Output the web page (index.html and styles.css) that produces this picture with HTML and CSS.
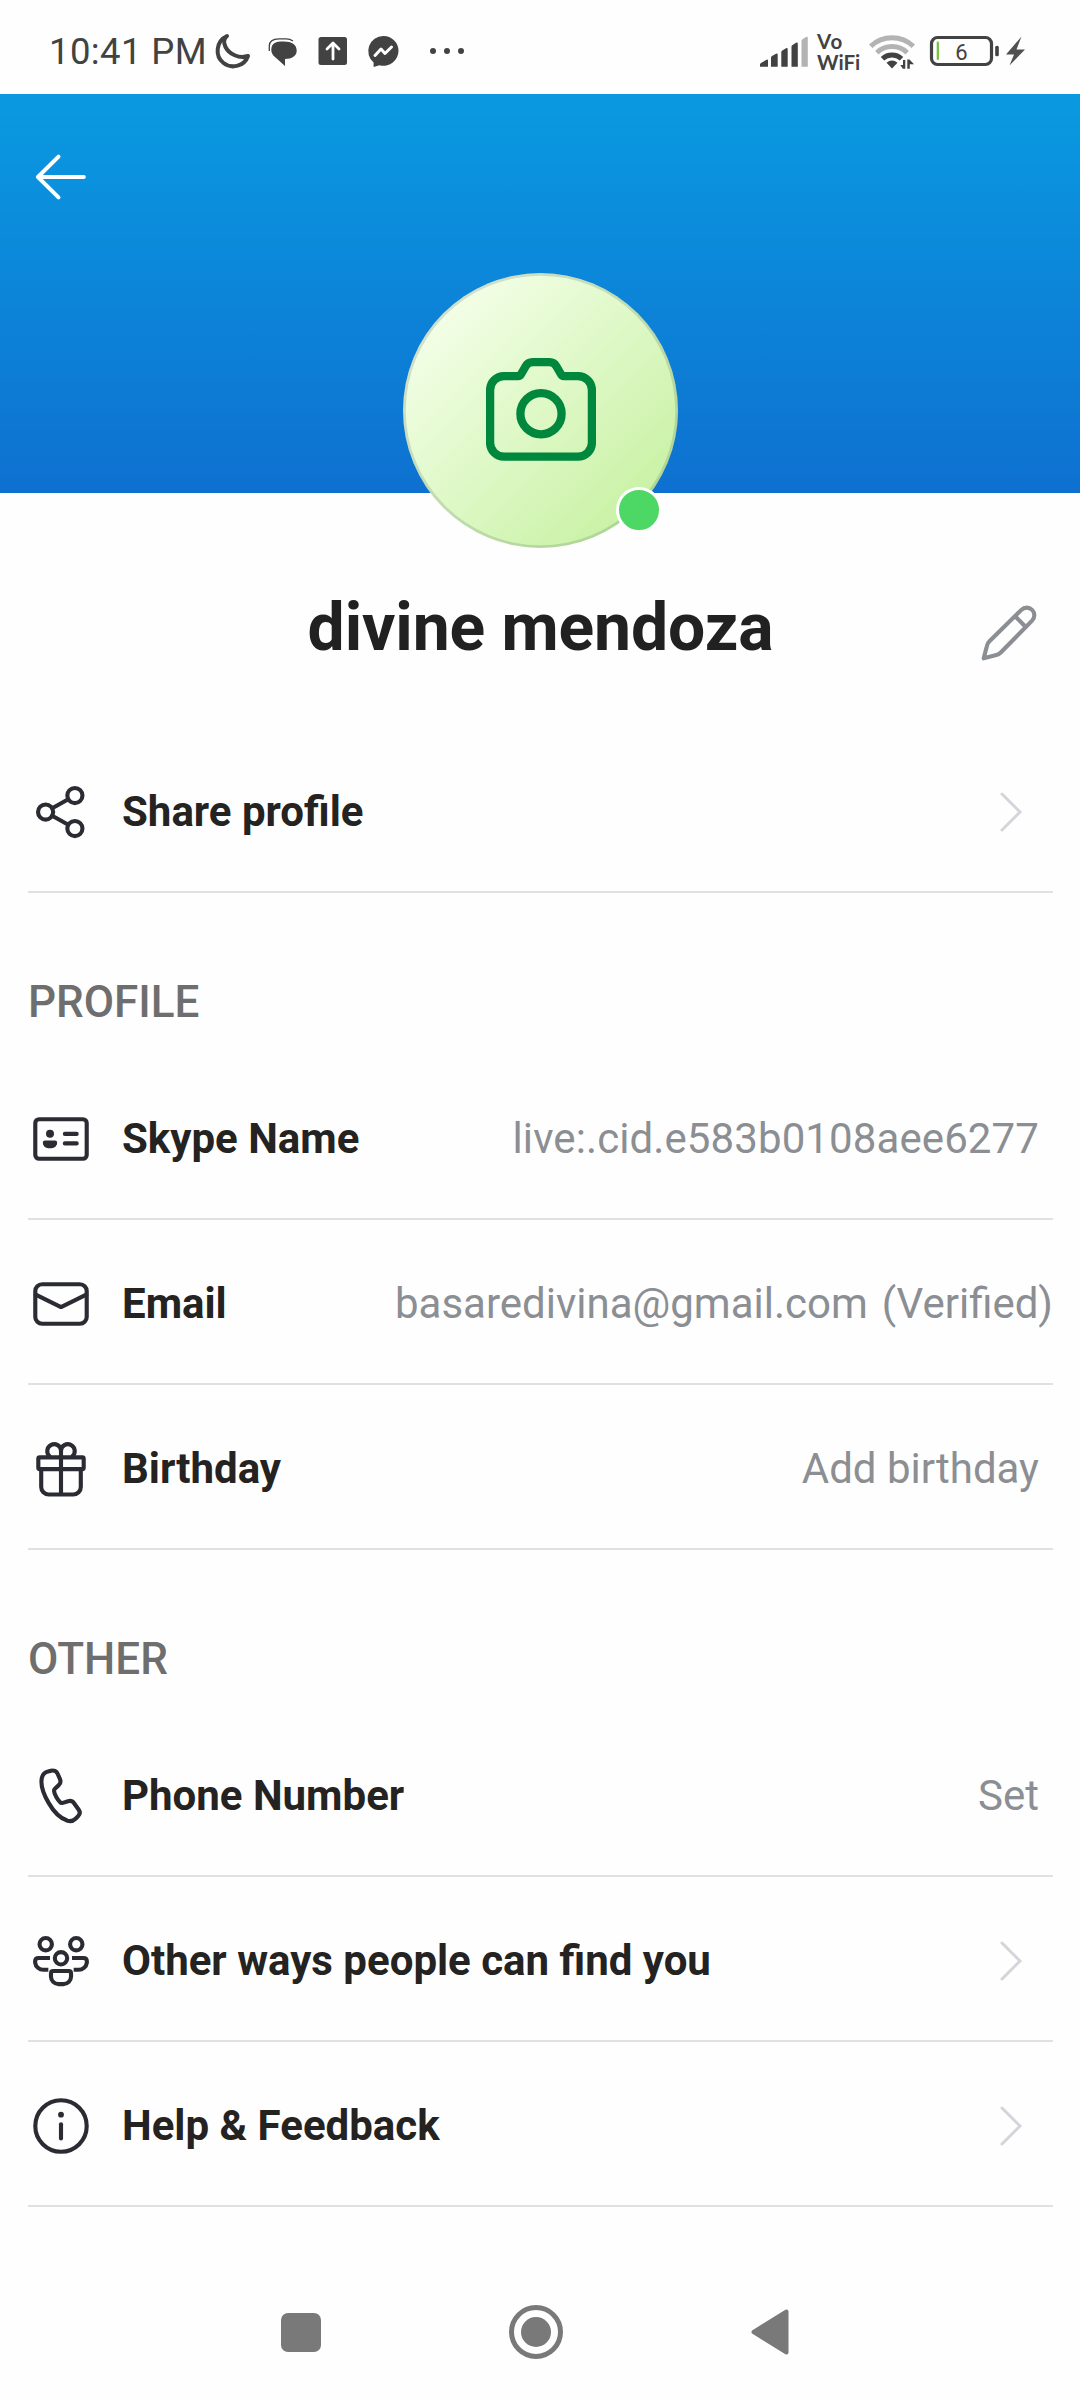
FILE: index.html
```html
<!DOCTYPE html>
<html lang="en">
<head>
<meta charset="utf-8">
<title>Profile</title>
<link rel="stylesheet" href="styles.css">
</head>
<body>
<div class="screen">
  <div class="status-bar">
    <span class="clock">10:41 PM</span>
    <svg class="status-left" width="260" height="94" viewBox="210 0 260 94">
      <path class="moon" d="M227 36C216 41 214.500 56 223.500 63C232 69.500 244.500 66 248 56C239 59 229 54 225.500 47C223 42 224.500 38 227 36Z"/>
      <path class="fill" d="M283 41.500H284C291.500 41.500 296.700 44.500 296.700 50.500C296.700 56 292 59 285 59V66L275 57C271.500 54 271.300 51 271.300 49C271.800 43 276 41.500 283 41.500Z"/>
      <path class="thin" d="M269.300 51V46C269.300 41 273 38.800 279 38.800H286C289 38.800 291 39.500 293 41"/>
      <rect class="fill" x="318.500" y="37" width="28.500" height="28" rx="2.500"/>
      <path class="white-stroke" d="M333 59V43.500M327 49L333 43L339 49"/>
      <path class="fill" d="M383.200 36A15 15 0 0 1 398.500 51A15 15 0 0 1 379.500 65.300L373.600 67V62.500A15 15 0 0 1 383.200 36Z"/>
      <path class="white-stroke zig" d="M375 55.500L381 49L385 53.500L391.500 47"/>
      <circle class="fill" cx="433" cy="51" r="3"/><circle class="fill" cx="447" cy="51" r="3"/><circle class="fill" cx="461" cy="51" r="3"/>
    </svg>
    <svg class="signal" width="48" height="94" viewBox="760 0 48 94">
      <path class="fill" d="M760 66.800V64.500Q760 63.500 761 63L766 60Q768 58.800 768 60.500V66.800ZM771 66.800V57.500Q771 56.500 772 56L776 53.700Q777.700 52.800 777.700 54.800V66.800ZM781.300 66.800V52Q781.300 51 782.300 50.500L786 48.300Q787.700 47.500 787.700 49.300V66.800ZM791.500 66.800V46.500Q791.500 45.500 792.500 45L796 42.700Q797.800 41.800 797.800 43.700V66.800Z"/>
      <path class="fade" d="M801.500 66.800V41Q801.500 40 802.500 39.300L806 37Q807.800 36 807.800 38V66.800Z"/>
    </svg>
    <span class="vowifi"><span class="vo">Vo</span><span>WiFi</span></span>
    <svg class="status-right" width="160" height="94" viewBox="868 0 160 94">
      <path class="fade-arc" d="M870.700 46.200A31 31 0 0 1 913.300 46.200M876.800 52.700A22 22 0 0 1 907.200 52.700"/>
      <path class="arc" d="M882.500 58.800A13.800 13.800 0 0 1 901.500 58.800"/>
      <path class="fill" d="M886.500 62.700Q892 58.500 897.500 62.700L892 68.400ZM902.800 68.800L900.300 65H903V60H905.300V68.800ZM907.300 68.800V59.500H909.500L914 64.300H909.800V68.800Z"/>
      <rect class="battery" x="931.500" y="37.500" width="60" height="27" rx="6"/>
      <rect class="charge" x="936.700" y="41.500" width="2.300" height="18.500" rx="1"/>
      <rect class="fill" x="995.200" y="45.700" width="3.600" height="10.500" rx="1.500"/>
      <text class="level" x="961.500" y="59.800" text-anchor="middle">6</text>
      <path class="bolt" d="M1021.500 36.500L1006 54.500H1014L1009.500 65.500L1025 49.500H1016.500Z"/>
    </svg>
  </div>

  <div class="banner">
    <svg class="back" width="66" height="66" viewBox="0 0 24 24"><path d="M20.300 12H3.600M11.100 4.600L3.600 12L11.100 19.400"/></svg>
    <div class="avatar">
      <svg width="110" height="103" viewBox="0 0 110 103"><path d="M18 18.100H32Q34 18.100 35 16.300L39.500 8.500Q42 4.200 46.500 4.200H63.500Q68 4.200 70.500 8.500L75 16.300Q76 18.100 78 18.100H92A13.900 13.900 0 0 1 105.900 32V84.800A13.900 13.900 0 0 1 92 98.700H18A13.900 13.900 0 0 1 4.100 84.800V32A13.900 13.900 0 0 1 18 18.100Z"/><circle cx="55" cy="55.700" r="20.600"/></svg>
      <span class="presence"></span>
    </div>
  </div>

  <div class="name-row">
    <h1>divine mendoza</h1>
    <svg class="edit" width="66" height="66" viewBox="0 0 24 24"><path d="M2.800 21.200L4 16.600Q4.200 15.700 4.900 15L16.500 3.600A2.740 2.740 0 0 1 20.400 7.500L9 19.100Q8.300 19.800 7.400 20ZM14.200 5.900L18.100 9.800"/></svg>
  </div>

  <div class="list">
    <div class="row">
      <svg class="icon" viewBox="0 0 24 24"><circle cx="6.400" cy="12" r="2.750"/><circle cx="17.050" cy="6" r="2.750"/><circle cx="17.050" cy="18" r="2.750"/><path d="M8.800 10.650L14.650 7.350M8.800 13.350L14.650 16.650"/></svg>
      <span class="label">Share profile</span>
      <svg class="chevron" width="24" height="40" viewBox="0 0 24 40"><path d="M2 2L20 20L2 38"/></svg>
    </div>

    <h2>PROFILE</h2>
    <div class="row">
      <svg class="icon" viewBox="0 0 24 24"><rect x="2.650" y="4.800" width="18.700" height="14.400" rx="1.400"/><path d="M13.400 10.150H17.700M13.400 13.600H17.700"/><path class="solid" d="M8 8.600A1.450 1.450 0 1 1 8 11.500A1.450 1.450 0 1 1 8 8.600ZM6.150 12.500H9.850Q10.600 12.500 10.600 13.250C10.600 14.700 9.500 15.400 8 15.400S5.400 14.700 5.400 13.250Q5.400 12.500 6.150 12.500Z"/></svg>
      <span class="label">Skype Name</span>
      <span class="value id">live:.cid.e583b0108aee6277</span>
    </div>
    <div class="row">
      <svg class="icon" viewBox="0 0 24 24"><rect x="2.650" y="4.800" width="18.700" height="14.400" rx="2.500"/><path d="M2.800 8.600L12 13.100L21.200 8.600"/></svg>
      <span class="label">Email</span>
      <span class="value">basaredivina@gmail.com</span><span class="note">(Verified)</span>
    </div>
    <div class="row">
      <svg class="icon" viewBox="0 0 24 24"><rect x="3.750" y="7.750" width="16.500" height="4.300" rx=".5"/><path d="M4.800 12V18.500A2.750 2.750 0 0 0 7.550 21.250H16.450A2.750 2.750 0 0 0 19.200 18.500V12M12 5.300V21.250M12 7.500V5.300A2.500 2.500 0 1 0 7.800 7.300M12 5.300A2.500 2.500 0 1 1 16.200 7.300"/></svg>
      <span class="label">Birthday</span>
      <span class="value">Add birthday</span>
    </div>

    <h2>OTHER</h2>
    <div class="row">
      <svg class="icon" viewBox="0 0 24 24"><path d="M7.280 3.100L8.350 2.800A2 2 0 0 1 10.770 3.930L11.630 5.840A2 2 0 0 1 11.200 8.050L9.780 9.350A1 1 0 0 0 9.470 10C9.430 10.600 9.730 11.400 10.330 12.450C10.850 13.350 11.250 13.850 11.600 14.150A1 1 0 0 0 12.650 14.500L14.560 13.900A2 2 0 0 1 16.760 14.650L18.450 17A1.850 1.850 0 0 1 18.200 19.350L17.300 20.250A3 3 0 0 1 14.400 21C11.800 20.200 9.500 18 7.500 14.500C5.400 10.900 4.400 7.800 5.100 5.200A3 3 0 0 1 7.280 3.100Z"/></svg>
      <span class="label">Phone Number</span>
      <span class="value">Set</span>
    </div>
    <div class="row">
      <svg class="icon" viewBox="0 0 24 24"><circle cx="6.450" cy="5.900" r="2.250"/><circle cx="17.550" cy="5.900" r="2.250"/><circle cx="12" cy="11" r="2.250"/><path class="butt" d="M8 10.900H3.900Q2.600 10.900 2.600 12.100V12.600A3 3 0 0 0 5.600 15.200H7.400M16 10.900H20.100Q21.400 10.900 21.400 12.100V12.600A3 3 0 0 1 18.400 15.200H16.600"/><path d="M9.200 15.650H14.800Q15.650 15.650 15.650 16.500V17.650A2.750 2.750 0 0 1 12.900 20.400H11.100A2.750 2.750 0 0 1 8.350 17.650V16.500Q8.350 15.650 9.200 15.650Z"/></svg>
      <span class="label">Other ways people can find you</span>
      <svg class="chevron" width="24" height="40" viewBox="0 0 24 40"><path d="M2 2L20 20L2 38"/></svg>
    </div>
    <div class="row">
      <svg class="icon" viewBox="0 0 24 24"><circle cx="12" cy="12" r="9.350"/><path d="M12 11.400V16.500"/><circle class="solid" cx="12" cy="7.900" r="1.050"/></svg>
      <span class="label">Help &amp; Feedback</span>
      <svg class="chevron" width="24" height="40" viewBox="0 0 24 40"><path d="M2 2L20 20L2 38"/></svg>
    </div>
  </div>

  <div class="nav-bar">
    <span class="recents"></span>
    <span class="home"><span class="home-dot"></span></span>
    <svg width="38" height="46" viewBox="0 0 38 46"><path d="M2.500 23L35.500 2.500V43.500Z"/></svg>
  </div>
</div>
</body>
</html>
```
FILE: styles.css
```css
* { box-sizing: border-box; }

body {
  margin: 0;
  font-family: Roboto, "Liberation Sans", sans-serif;
  background: #fefefe;
}

svg {
  display: block;
  flex: none;
}

h1, h2 { margin: 0; }

.screen {
  width: 1080px;
  height: 2400px;
  display: flex;
  flex-direction: column;
  overflow: hidden;
}

/* Status bar */
.status-bar {
  height: 94px;
  display: flex;
  align-items: center;
  padding-left: 49px;
  color: #424242;
}

.clock {
  width: 161px;
  padding-top: 9px;
  font-size: 36.5px;
  font-weight: 450;
  letter-spacing: 0.400px;
  white-space: nowrap;
}

.signal { margin-left: 290px; }

.vowifi {
  width: 51px;
  margin: 0 0 0 9px;
  padding-top: 8px;
  display: flex;
  flex-direction: column;
  gap: 1px;
  font-family: Lato, sans-serif;
  font-size: 20.500px;
  font-weight: 700;
  line-height: 20px;
}

.vo { letter-spacing: 1px; }

.fill { fill: #424242; }
.fade { fill: #b3b3b3; }
.moon { fill: none; stroke: #424242; stroke-width: 4; stroke-linejoin: round; }
.thin { fill: none; stroke: #424242; stroke-width: 1.300; }
.white-stroke { fill: none; stroke: #fff; stroke-width: 2.800; stroke-linecap: round; stroke-linejoin: round; }
.zig { stroke-width: 3; }
.fade-arc { fill: none; stroke: #b3b3b3; stroke-width: 5; }
.arc { fill: none; stroke: #424242; stroke-width: 5; }
.battery { fill: none; stroke: #424242; stroke-width: 3.200; }
.charge { fill: #78c340; }
.bolt { fill: #505050; }
.level { fill: #424242; font-size: 22px; font-weight: 450; }

/* Header */
.banner {
  height: 399px;
  flex: none;
  position: relative;
  padding: 50px 28px;
  background: linear-gradient(#0a9ae1, #0e70d0);
}

.back path {
  fill: none;
  stroke: #fff;
  stroke-width: 1.450;
  stroke-linecap: round;
  stroke-linejoin: round;
}

.avatar {
  position: absolute;
  top: 179px;
  left: 403px;
  width: 275px;
  height: 275px;
  display: flex;
  align-items: flex-start;
  padding: 85px 0 0 83px;
  border-radius: 50%;
  background: linear-gradient(135deg, #f6ffec 8%, #c6f1a0 92%);
  box-shadow: inset 0 0 0 2.750px rgba(60, 90, 80, 0.18);
}

.avatar svg { fill: none; stroke: #00873e; stroke-width: 8.300; }

.presence {
  position: absolute;
  left: 213px;
  top: 213.500px;
  width: 46px;
  height: 46px;
  border: 3px solid #fff;
  border-radius: 50%;
  background: #4dd865;
}

.name-row {
  height: 235px;
  flex: none;
  display: grid;
  grid-template-columns: 1fr auto 1fr;
  align-items: center;
  padding: 34px 0 0 1px;
}

.name-row h1 {
  grid-column: 2;
  font-size: 66px;
  font-weight: 700;
  letter-spacing: -0.100px;
  color: #212121;
}

.edit {
  justify-self: end;
  margin: 10px 38px 0 0;
}

.edit path { fill: none; stroke: #8b8e93; stroke-width: 1.500; stroke-linejoin: round; }

/* Settings list */
.list { padding: 0 27px 0 28px; }

.row {
  height: 165px;
  display: flex;
  align-items: center;
  padding-top: 5px;
  border-bottom: 2px solid #e1e1e1;
  font-size: 42px;
  white-space: nowrap;
}

.icon {
  width: 66px;
  height: 66px;
  fill: none;
  stroke: #2b2c33;
  stroke-width: 1.500;
  stroke-linecap: round;
  stroke-linejoin: round;
}

.icon .solid { fill: #2b2c33; stroke: none; }
.icon .butt { stroke-linecap: butt; }

.label {
  margin: 0 auto 0 28px;
  padding-bottom: 2px;
  font-weight: 700;
  color: #242321;
}

.value,
.note {
  padding-bottom: 2px;
  color: #8b8e93;
}

.value { margin-right: 14px; }
.id { letter-spacing: 0.100px; }

.chevron { margin-right: 29px; }
.chevron path { fill: none; stroke: #d4d5db; stroke-width: 3; stroke-linecap: round; }

.list h2 {
  height: 162px;
  display: flex;
  align-items: center;
  padding-top: 55px;
  font-size: 44px;
  font-weight: 500;
  color: #6e6e6e;
}

/* System navigation */
.nav-bar {
  flex: 1;
  display: flex;
  align-items: center;
  padding: 57px 0 0 281px;
}

.recents {
  width: 40px;
  height: 39px;
  border-radius: 7px;
  background: #797979;
}

.home {
  width: 54px;
  height: 54px;
  margin: 0 188px;
  display: grid;
  place-items: center;
  border: 5px solid #797979;
  border-radius: 50%;
}

.home-dot {
  width: 30px;
  height: 30px;
  border-radius: 50%;
  background: #797979;
}

.nav-bar path { fill: #797979; stroke: #797979; stroke-width: 4; stroke-linejoin: round; }
```
